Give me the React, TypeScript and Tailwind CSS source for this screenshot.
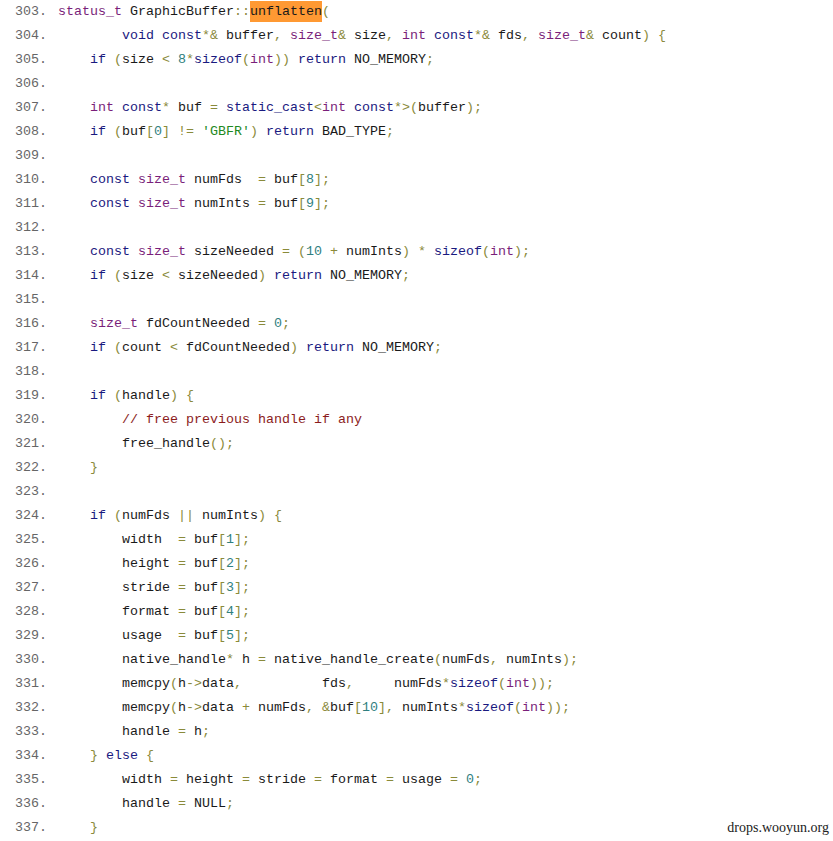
const lines: { n: number; code: string }[] = [
  { n: 303, code: "status_t GraphicBuffer::unflatten(" },
  { n: 304, code: "        void const*& buffer, size_t& size, int const*& fds, size_t& count) {" },
  { n: 305, code: "    if (size < 8*sizeof(int)) return NO_MEMORY;" },
  { n: 306, code: "" },
  { n: 307, code: "    int const* buf = static_cast<int const*>(buffer);" },
  { n: 308, code: "    if (buf[0] != 'GBFR') return BAD_TYPE;" },
  { n: 309, code: "" },
  { n: 310, code: "    const size_t numFds  = buf[8];" },
  { n: 311, code: "    const size_t numInts = buf[9];" },
  { n: 312, code: "" },
  { n: 313, code: "    const size_t sizeNeeded = (10 + numInts) * sizeof(int);" },
  { n: 314, code: "    if (size < sizeNeeded) return NO_MEMORY;" },
  { n: 315, code: "" },
  { n: 316, code: "    size_t fdCountNeeded = 0;" },
  { n: 317, code: "    if (count < fdCountNeeded) return NO_MEMORY;" },
  { n: 318, code: "" },
  { n: 319, code: "    if (handle) {" },
  { n: 320, code: "        // free previous handle if any" },
  { n: 321, code: "        free_handle();" },
  { n: 322, code: "    }" },
  { n: 323, code: "" },
  { n: 324, code: "    if (numFds || numInts) {" },
  { n: 325, code: "        width  = buf[1];" },
  { n: 326, code: "        height = buf[2];" },
  { n: 327, code: "        stride = buf[3];" },
  { n: 328, code: "        format = buf[4];" },
  { n: 329, code: "        usage  = buf[5];" },
  { n: 330, code: "        native_handle* h = native_handle_create(numFds, numInts);" },
  { n: 331, code: "        memcpy(h->data,          fds,     numFds*sizeof(int));" },
  { n: 332, code: "        memcpy(h->data + numFds, &buf[10], numInts*sizeof(int));" },
  { n: 333, code: "        handle = h;" },
  { n: 334, code: "    } else {" },
  { n: 335, code: "        width = height = stride = format = usage = 0;" },
  { n: 336, code: "        handle = NULL;" },
  { n: 337, code: "    }" },
];

const types = ["int", "size_t", "status_t"];
const keywords = ["void", "const", "if", "return", "static_cast", "sizeof", "else"];

function tokenClass(tok: string) {
  if (tok.startsWith("//")) return "text-[#8b1c1c]";
  if (tok.startsWith("'")) return "text-[#1f8a1f]";
  if (types.includes(tok)) return "text-[#7a1f7a]";
  if (keywords.includes(tok)) return "text-[#1a1a80]";
  if (/^\d+$/.test(tok)) return "text-[#2f7f7f]";
  if (/^[A-Za-z_]\w*$/.test(tok) || /^\s+$/.test(tok)) return "text-[#1a1a1a]";
  return "text-[#8a8a3a]";
}

function CodeLine({ code }: { code: string }) {
  const tokens = code.match(/\/\/.*|'[^']*'|[A-Za-z_]\w*|\d+|\s+|./g) ?? [];
  return (
    <span className="whitespace-pre">
      {tokens.map((t, i) =>
        t === "unflatten" ? (
          <span key={i} className="bg-[#ff9933] text-[#1a1a1a] py-[3px]">
            {t}
          </span>
        ) : (
          <span key={i} className={tokenClass(t)}>
            {t}
          </span>
        )
      )}
    </span>
  );
}

export default function App() {
  return (
    <div className="relative w-[833px] h-[841px] bg-white overflow-hidden font-['Liberation_Mono','DejaVu_Sans_Mono',monospace] text-[13.33px]">
      <div className="flex flex-col">
        {lines.map((l) => (
          <div key={l.n} className="flex h-6 items-center">
            <span className="w-[58px] pl-[15px] text-[#666] shrink-0">{l.n}.</span>
            <CodeLine code={l.code} />
          </div>
        ))}
      </div>
      {/* watermark */}
      <div className="absolute right-[4px] bottom-[3px] font-['Liberation_Serif',serif] text-[14px] text-[#222]">
        drops.wooyun.org
      </div>
    </div>
  );
}
